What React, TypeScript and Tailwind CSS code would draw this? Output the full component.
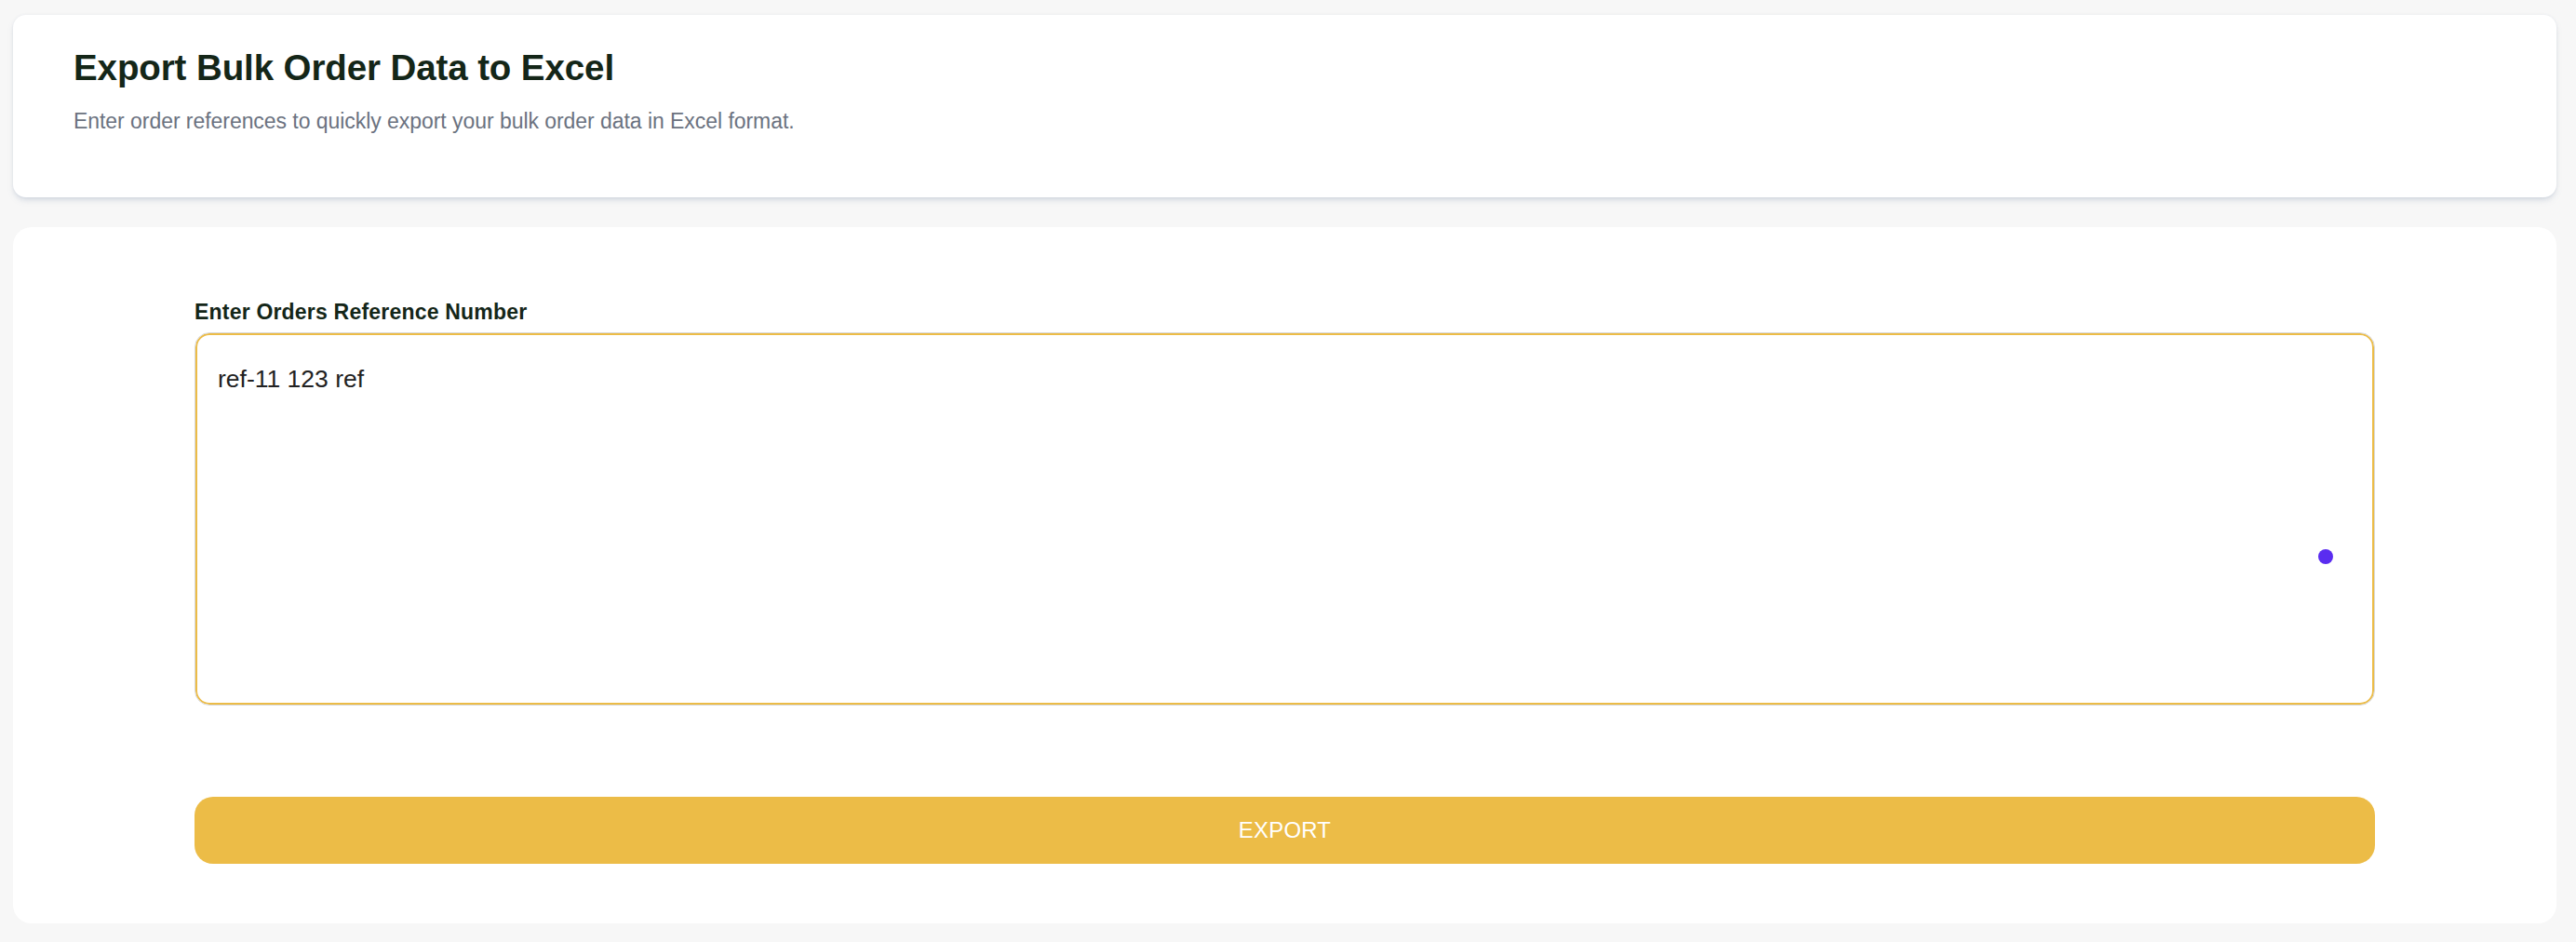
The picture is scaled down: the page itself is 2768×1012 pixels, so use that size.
import React from "react";

export default function App() {
  return (
    <div
      className="min-h-screen w-full bg-[#f7f7f7] pl-[14px] pr-[21px] pt-[16px] pb-[20px] flex flex-col gap-[32px]"
      style={{ fontFamily: '"Liberation Sans", Arial, sans-serif' }}
    >
      <div className="bg-white rounded-[14px] shadow-[0_4px_7px_-2px_rgba(120,140,170,0.35),0_0_3px_rgba(120,140,170,0.12)] pl-[65px] pr-[40px] pt-[34px] pb-[68px] flex flex-col gap-[20px]">
        <h1 className="text-[38.5px] leading-[46px] font-bold text-[#142618] tracking-[-0.1px]">
          Export Bulk Order Data to Excel
        </h1>
        <p className="text-[23px] leading-[28px] text-[#6b7280] tracking-[-0.05px]">
          Enter order references to quickly export your bulk order data in Excel format.
        </p>
      </div>

      <div className="bg-white rounded-[20px] px-[195px] pt-[77px] pb-[64px] flex flex-col">
        <label className="text-[23px] leading-[28px] font-bold text-[#142618] tracking-[0.2px]">
          Enter Orders Reference Number
        </label>
        <div className="relative mt-[8px]">
          <textarea
            defaultValue="ref-11 123 ref"
            className="block w-full h-[401px] resize-none rounded-[16px] border-[1.5px] border-[#d9d9d9] shadow-[inset_0_0_0_2px_#ecbc47] bg-white pl-[24px] pr-[24px] pt-[31px] text-[26.5px] leading-[36px] text-[#222222] outline-none"
            style={{ fontFamily: '"Liberation Sans", Arial, sans-serif' }}
          />
          <span className="absolute right-[45px] top-[233px] w-[16px] h-[16px] rounded-full bg-[#5a2cf0]" />
        </div>
        <button className="mt-[98px] h-[72px] w-full rounded-[20px] bg-[#ecbc47] text-white text-[24px] tracking-[0.2px]">
          EXPORT
        </button>
      </div>
    </div>
  );
}
